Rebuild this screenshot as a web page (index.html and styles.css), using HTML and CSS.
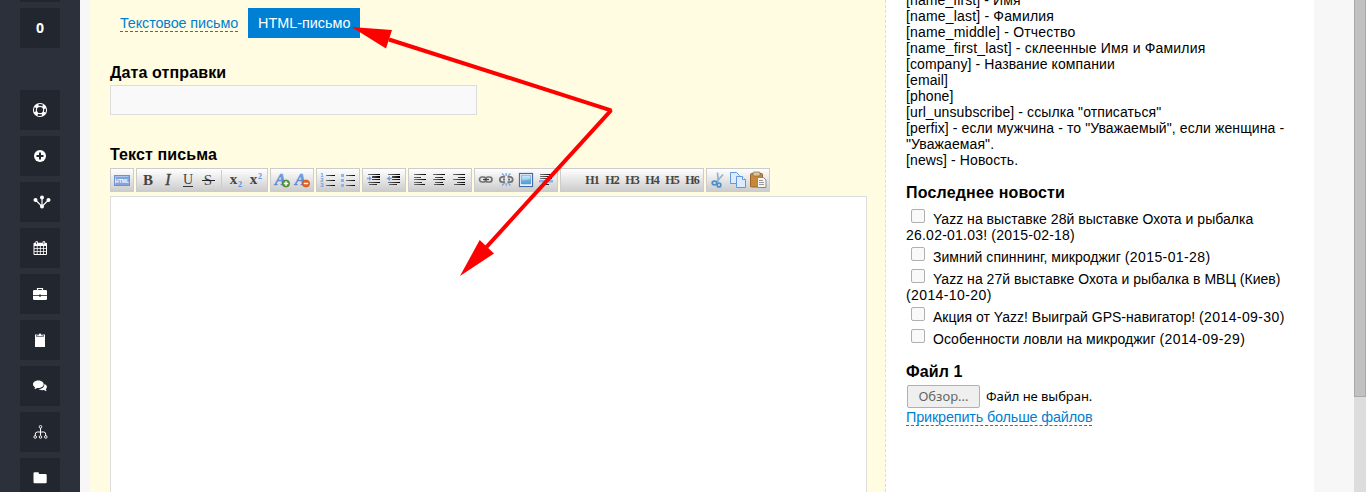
FILE: index.html
```html
<!DOCTYPE html>
<html lang="ru">
<head>
<meta charset="utf-8">
<title>Рассылка</title>
<link rel="stylesheet" href="styles.css">
</head>
<body>
<svg class="defs" width="0" height="0">
  <defs>
    <linearGradient id="ink" x1="0" x2="1" y1="0" y2="0"><stop offset="0" stop-color="#777"/><stop offset="1" stop-color="#000"/></linearGradient>
    <linearGradient id="blue" x1="0" x2="0" y1="0" y2="1"><stop offset="0" stop-color="#d3ebfd"/><stop offset="1" stop-color="#5fb0e6"/></linearGradient>
    <linearGradient id="letter" x1="0" x2="0" y1="0" y2="1"><stop offset="0" stop-color="#86b5f0"/><stop offset="1" stop-color="#4377c8"/></linearGradient>
  </defs>
</svg>
<div class="app">
  <nav class="sidebar">
    <a class="tile"></a>
    <a class="tile tile-count">0</a>
    <a class="tile"><svg width="16" height="16" viewBox="0 0 16 16"><circle cx="8" cy="8" r="5.100" fill="none" stroke="#fff" stroke-width="4"/><circle cx="8" cy="8" r="5.100" fill="none" stroke="#22262f" stroke-width="1.800" stroke-dasharray="4.200 3.811" stroke-dashoffset="2.100"/></svg></a>
    <a class="tile"><svg width="16" height="16" viewBox="0 0 16 16"><circle cx="8" cy="8" r="6" fill="#fff"/><path d="M8 4.500v7M4.500 8h7" stroke="#22262f" stroke-width="2"/></svg></a>
    <a class="tile"><svg class="nudge" width="18" height="16" viewBox="0 0 18 16"><path d="M2.500 6L9 12.500 15.500 6M9 3v10" fill="none" stroke="#fff" stroke-width="1.200"/><g fill="#fff"><circle cx="9" cy="3.500" r="2"/><circle cx="2.500" cy="6" r="2"/><circle cx="15.500" cy="6" r="2"/><circle cx="9" cy="12.500" r="2"/></g></svg></a>
    <a class="tile"><svg width="16" height="16" viewBox="0 0 16 16"><path fill="#fff" d="M2.500 2.800h1V1.200h2.300v1.600h4.900V1.200H13v1.600h1q1 0 1 1V14q0 1-1 1H2.500q-1 0-1-1V3.800q0-1 1-1z"/><path fill="#22262f" d="M2.500 6h2.300v2.200H2.500zM5.600 6h2.300v2.200H5.600zM8.700 6H11v2.200H8.700zM11.800 6H14v2.200h-2.200zM2.500 9h2.300v2.200H2.500zM5.600 9h2.300v2.200H5.600zM8.700 9H11v2.200H8.700zM11.800 9H14v2.200h-2.200zM2.500 12h2.300v2H2.500zM5.600 12h2.300v2H5.600zM8.700 12H11v2H8.700zM11.800 12H14v2h-2.200zM4.300 2h.7v2.300h-.7zM11.500 2h.7v2.300h-.7z"/></svg></a>
    <a class="tile"><svg width="16" height="16" viewBox="0 0 16 16"><path d="M5.500 4.500v-2h5v2" fill="none" stroke="#fff" stroke-width="1.200"/><rect x="1" y="4" width="14" height="10" rx="1.300" fill="#fff"/><path stroke="#22262f" stroke-width=".8" d="M1 9.500h14"/><path fill="#22262f" d="M7.200 8.500h1.600v2.200H7.200z"/></svg></a>
    <a class="tile"><svg width="16" height="16" viewBox="0 0 16 16"><path fill="#fff" d="M3 2.500h10V15H3z"/><path d="M4.500 4.500V3H6.500c0-2.500 3-2.500 3 0h2v1.500z" fill="#fff" stroke="#22262f" stroke-width=".6"/></svg></a>
    <a class="tile"><svg width="16" height="16" viewBox="0 0 16 16"><path fill="#fff" d="M12.300 6c2.300.7 3.300 2.500 2.200 4.200-.3.500-.7.900-.7 1.100 0 .6.500 1.200 1 1.700-1.200.1-2-.3-2.800-1-2.200.4-4.200 0-5.400-1C10 11 12.600 9 12.300 6z"/><path fill="#fff" d="M6.300 2.500C3.300 2.500 1 4.200 1 6.300c0 1.300.9 2.400 2.200 3.100-.2.700-.6 1.200-1.200 1.700 1.200 0 2.200-.5 3-1.200.4.100.9.100 1.300.1 3 0 5.400-1.600 5.400-3.700S9.300 2.500 6.300 2.500z"/></svg></a>
    <a class="tile"><svg width="16" height="16" viewBox="0 0 16 16"><g transform="translate(.5 0)" fill="none" stroke="#fff"><path d="M8 4v7.500M2.800 12V10q0-2 2.200-2h6q2.200 0 2.200 2v2"/><circle cx="8" cy="2.800" r="1.300" stroke-width=".9"/><circle cx="2.700" cy="13" r="1.300" stroke-width=".9"/><circle cx="8" cy="13" r="1.300" stroke-width=".9"/><circle cx="13.300" cy="13" r="1.300" stroke-width=".9"/></g></svg></a>
    <a class="tile"><svg width="16" height="16" viewBox="0 0 16 16"><path fill="#fff" d="M1.500 3.500q0-1.200 1.200-1.200h3.200q1 0 1.100 1.200v.5h6.500q1.200 0 1.200 1.200v7q0 1.100-1.200 1.100H2.700q-1.200 0-1.200-1.100z"/></svg></a>
  </nav>

  <main class="letter">
    <div class="tabs"><a class="tab tab-plain"><span>Текстовое письмо</span></a><a class="tab tab-active">HTML-письмо</a></div>
    <h3 class="label label-date">Дата отправки</h3>
    <input class="date" type="text">
    <h3 class="label label-text">Текст письма</h3>
    <div class="toolbar">
      <div class="group"><svg width="20" height="20" viewBox="0 0 20 20"><rect x="2.500" y="5.500" width="15" height="10" fill="#7da4de" stroke="#6b93cf"/><path d="M3.500 14.500v-8h13" fill="none" stroke="#a9c5ec"/><text class="t-html" x="10" y="13">HTML</text></svg></div>
      <div class="group">
        <svg width="20" height="20"><text class="t-b" x="10" y="15">B</text></svg>
        <svg width="20" height="20"><text class="t-i" x="10" y="15">I</text></svg>
        <svg width="20" height="20"><text class="t-u" x="10" y="14">U</text><path d="M5 16.500h10" stroke="#333"/></svg>
        <svg width="20" height="20"><text class="t-s" x="10" y="15">S</text><path d="M4 10.500h13" stroke="#222"/></svg>
        <i class="sep"></i>
        <svg width="20" height="20"><text class="t-x" x="7.500" y="14">x</text><text class="t-n" x="14" y="17">2</text></svg>
        <svg width="20" height="20"><text class="t-x" x="7.500" y="14">x</text><text class="t-n" x="14" y="9">2</text></svg>
      </div>
      <div class="group">
        <svg width="20" height="20"><text class="t-a" x="8.500" y="15">A</text><circle cx="14" cy="13.500" r="3.600" fill="#5a9a3a" stroke="#376d20" stroke-width=".6"/><path d="M14 11.300v4.400M11.800 13.500h4.400" stroke="#fff" stroke-width="1.400"/></svg>
        <svg width="20" height="20"><text class="t-a" x="8.500" y="15">A</text><circle cx="14" cy="13.500" r="3.600" fill="#ea6420" stroke="#b84412" stroke-width=".6"/><path d="M11.800 13.500h4.400" stroke="#fff" stroke-width="1.400"/></svg>
      </div>
      <div class="group">
        <svg width="20" height="20"><g class="t-l"><text x="4" y="7">1</text><text x="4" y="12">2</text><text x="4" y="17">3</text></g><path fill="url(#ink)" d="M8 5h9v1H8zM8 10h9v1H8zM8 15h9v1H8z"/></svg>
        <svg width="20" height="20"><path fill="#8bb4ec" d="M3 4h3v3H3zM3 9h3v3H3zM3 14h3v3H3z"/><path fill="url(#ink)" d="M8 5h9v1H8zM8 10h9v1H8zM8 15h9v1H8z"/></svg>
      </div>
      <div class="group">
        <svg width="20" height="20"><path fill="url(#ink)" d="M4 4h12v1H4zM8 6h8v2H8zM8 9h8v1H8zM4 12h12v1H4zM5 14h8v1H5z"/><path fill="#6fa2e8" d="M3 7.800h2V6l2.800 2.500L5 11V9.200H3z"/></svg>
        <svg width="20" height="20"><path fill="url(#ink)" d="M4 4h12v1H4zM8 6h8v2H8zM8 9h8v1H8zM4 12h12v1H4zM5 14h8v1H5z"/><path fill="#6fa2e8" d="M7.800 7.800H6V6L2.500 8.500 6 11V9.200h1.800z"/></svg>
      </div>
      <div class="group">
        <svg width="20" height="20"><path fill="url(#ink)" d="M4 4h12v1H4zM4 7h7v1H4zM4 9h12v1H4zM4 12h8v1H4zM4 14h11v1H4z"/></svg>
        <svg width="20" height="20"><path fill="url(#ink)" d="M3 4h12v1H3zM5 7h8v1H5zM3 9h12v1H3zM5 12h8v1H5zM4 14h10v1H4z"/></svg>
        <svg width="20" height="20"><path fill="url(#ink)" d="M3 4h12v1H3zM8 7h7v1H8zM3 9h12v1H3zM7 12h8v1H7zM4 14h11v1H4z"/></svg>
      </div>
      <div class="group">
        <svg width="20" height="20"><g fill="none" stroke="#727272" stroke-width="1.700"><rect x="3.500" y="7" width="6.500" height="5" rx="2.500"/><rect x="9.500" y="7" width="6.500" height="5" rx="2.500"/><path d="M7 9.500h6" stroke="#444" stroke-width="1.200"/></g></svg>
        <svg width="20" height="20"><g fill="none" stroke="#727272" stroke-width="1.800"><path d="M9 6.800H6.500a2.700 2.700 0 0 0 0 5.400H9M11.500 6.800H14a2.700 2.700 0 0 1 0 5.400h-2.500M7 9.500h2M12 9.500h2"/><path d="M6 3.500l2.500 2.500M14.500 3.500L12 6M6 15.500L8.500 13M14.500 15.500L12 13M10.200 3v3M10.200 16v-3" stroke="#74a8ec" stroke-width="1.300"/></g></svg>
        <svg width="20" height="20"><rect x="3.500" y="3.500" width="13" height="13" fill="#fff" stroke="#416cad" stroke-width="1.200"/><path fill="url(#blue)" stroke="#5389b8" stroke-width=".6" d="M5.300 5.300h9.400v8.700H5.300z"/><path fill="#4b9bd0" d="M5.500 10.500q4 0 9-1.500v5h-9z" opacity=".6"/></svg>
        <svg width="20" height="20"><path fill="url(#ink)" d="M4 4h12v1H4zM4 6h9v1H4zM4 8h12v1H4zM5 14h8v1H5z"/><path fill="#80b0ef" d="M3 10h14v2.500H3z"/></svg>
      </div>
      <div class="group">
        <i class="blank"></i>
        <svg width="20" height="20"><text class="t-h" x="10" y="14">H1</text></svg>
        <svg width="20" height="20"><text class="t-h" x="10" y="14">H2</text></svg>
        <svg width="20" height="20"><text class="t-h" x="10" y="14">H3</text></svg>
        <svg width="20" height="20"><text class="t-h" x="10" y="14">H4</text></svg>
        <svg width="20" height="20"><text class="t-h" x="10" y="14">H5</text></svg>
        <svg width="20" height="20"><text class="t-h" x="10" y="14">H6</text></svg>
      </div>
      <div class="group">
        <svg width="20" height="20"><path d="M9.500 2.500l.7 9M15 4.500L8 12.500" stroke="#8fb3d2" stroke-width="1.700"/><g fill="none" stroke="#4b8fcb" stroke-width="1.700"><ellipse cx="6.500" cy="13" rx="2.300" ry="1.800"/><ellipse cx="11" cy="15" rx="1.800" ry="2"/></g></svg>
        <svg width="20" height="20"><g fill="#dcebfd" stroke="#6399dc"><path d="M2.500 2.500h6l3 3v8h-9z"/><path d="M8.500 6.500h6l3 3v8h-9z"/><path d="M14.500 6.500v3h3" fill="#fff"/></g></svg>
        <svg width="20" height="20"><rect x="2.500" y="3.500" width="12" height="13.500" rx="1" fill="#c78839" stroke="#99642a"/><rect x="5" y="2" width="7" height="4" rx="1" fill="#d5c6a7" stroke="#8a6a3a" stroke-width=".7"/><path d="M9.500 7.500h6l2.500 2.500v7.500H9.500z" fill="#f6f6f6" stroke="#888"/><path stroke="#999" d="M11 10.500h4M11 12.500h5M11 14.500h5"/></svg>
      </div>
    </div>
    <div class="editor"></div>
    <svg class="arrows" width="300" height="260" viewBox="340 20 300 260"><path d="M389 39.500L611 110.300 486.500 247" fill="none" stroke="red" stroke-width="4" stroke-linejoin="bevel"/><path fill="red" d="M351.500 27L392 30l-6 18.500zM460 276l19.700-36 14.300 13.500z"/></svg>
  </main>

  <aside class="side">
    <p class="vars">[name_first] - Имя<br><span class="wide">[name_last] - Фамилия</span><br><span class="wide">[name_middle] - Отчество</span><br><span class="wide">[name_first_last] - склеенные Имя и Фамилия</span><br>[company] - Название компании<br>[email]<br>[phone]<br>[url_unsubscribe] - ссылка "отписаться"<br>[perfix] - если мужчина - то "Уважаемый", если женщина - "Уважаемая".<br>[news] - Новость.</p>
    <h3 class="label label-news">Последнее новости</h3>
    <div class="news">
      <label><i class="check"></i>Yazz на выставке 28й выставке Охота и рыбалка <span class="num">26.02-01.03! (2015-02-18)</span></label>
      <label><i class="check"></i>Зимний спиннинг, микроджиг <span class="day">(2015-01-28)</span></label>
      <label><i class="check"></i>Yazz на 27й выставке Охота и рыбалка в МВЦ (Киев) <span class="day">(2014-10-20)</span></label>
      <label><i class="check"></i>Акция от Yazz! Выиграй GPS-навигатор! <span class="day">(2014-09-30)</span></label>
      <label><i class="check"></i>Особенности ловли на микроджиг <span class="day">(2014-09-29)</span></label>
    </div>
    <h3 class="label label-file">Файл 1</h3>
    <div class="file"><button class="browse">Обзор...</button><span>Файл не выбран.</span></div>
    <a class="more">Прикрепить больше файлов</a>
  </aside>
  <div class="scrollbar"><div class="thumb"></div></div>
</div>
</body>
</html>
```
FILE: styles.css
```css
* { box-sizing: border-box; }
body { margin: 0; overflow: hidden; background: #f7f7f7; font: 14px/16px "Liberation Sans", Arial, sans-serif; color: #000; }
.defs { position: absolute; }
.app { display: flex; height: 492px; overflow: hidden; }

.sidebar { width: 80px; flex: none; padding-left: 20px; background: #2c303b; overflow: hidden; }
.tile { display: flex; align-items: center; justify-content: center; width: 40px; height: 40px; margin-bottom: 6px; background: #22262f; color: #fff; }
.tile:first-child { margin-top: -38px; }
.tile-count { margin-bottom: 42px; padding-bottom: 2px; font: bold 14px "Open Sans", sans-serif; }
.nudge { margin-left: 3px; }

.letter { position: relative; width: 796px; flex: none; margin-left: 10px; padding: 8px 18px 0 20px; background: #fffce2; border-right: 1px dashed #dcdce0; }
.tabs { display: flex; height: 30px; }
.tab { padding: 7px 10px; color: #0080d0; font-size: 14.4px; line-height: 16px; }
.tab-plain { width: 138px; letter-spacing: -.12px; white-space: nowrap; }
.tab span { display: block; border-bottom: 1px dashed #0080d0; }
.tab-active { background: #0080d4; color: #fff; }
.label { margin: 0; font-size: 16px; line-height: 18px; font-weight: bold; letter-spacing: .12px; }
.label-date { margin-top: 26px; }
.date { display: block; width: 367px; height: 30px; margin: 3px 0 0; padding: 0 8px; border: 1px solid #ddd; background: #f9f9f9; }
.label-text { margin-top: 31px; }
.toolbar { display: flex; gap: 2px; margin-top: 4px; }
.group { display: flex; height: 24px; padding: 1px; border: 1px solid #ccc; background: linear-gradient(#fff, #ccc); }
.group svg { display: block; flex: none; }
.sep { width: 8px; height: 18px; background: linear-gradient(#ccc, #ccc) 3px 0 / 1px 18px no-repeat; }
.blank { width: 20px; }
.editor { width: 757px; height: 320px; margin-top: 4px; border: 1px solid #ddd; background: #fff; }
.arrows { position: absolute; left: 250px; top: 20px; }

.group text { text-anchor: middle; font-family: "Liberation Serif", serif; font-weight: bold; fill: #444; }
.group .t-html { font: bold 5px "Liberation Sans", sans-serif; fill: #fff; }
.group .t-b { font-size: 15px; }
.group .t-i { font-size: 16px; font-style: italic; font-weight: normal; stroke: #444; stroke-width: .4px; }
.group .t-u { font-size: 14px; font-weight: normal; }
.group .t-s { font-size: 15px; font-weight: normal; }
.group .t-x { font-size: 15px; }
.group .t-n { font-size: 8px; fill: #5791e0; }
.group .t-a { font-size: 17px; font-style: italic; fill: url(#letter); stroke: #5c8fd8; stroke-width: .5px; }
.group .t-l text { font: bold 6px "Liberation Sans", sans-serif; fill: #689be2; }
.group .t-h { font-size: 12px; letter-spacing: -.9px; }

.side { width: 428px; flex: none; padding: 0 24px 0 20px; background: #fff; }
.vars { margin: -8px 0 0; letter-spacing: .1px; }
.wide { letter-spacing: .18px; }
.label-news { margin-top: 16px; letter-spacing: .18px; }
.news { margin-top: 3px; }
.news label { display: block; letter-spacing: .03px; }
.num { letter-spacing: .22px; }
.day { letter-spacing: .4px; }
.check { display: inline-block; width: 14px; height: 14px; margin: 4px 8px 0 5px; vertical-align: 1px; border: 1px solid #b0b0b0; border-radius: 2px; background: #f9f9f9; }
.label-file { margin-top: 16px; }
.file { display: flex; align-items: center; gap: 6px; height: 23px; margin: 4px 0 0 1px; font: 13px "Noto Sans", sans-serif; letter-spacing: -.05px; }
.file span { margin-top: -1px; }
.browse { width: 73px; height: 23px; padding: 0 0 1px; border: 1px solid #b0b0b0; border-radius: 2px; background: #efefef; color: #666; font: inherit; }
.more { display: inline-block; height: 17px; margin-top: 1px; color: #0080d0; font-size: 14.4px; letter-spacing: -.15px; border-bottom: 1px dashed #0080d0; }

.scrollbar { width: 12px; margin-left: auto; background: #ddd; }
.thumb { height: 397px; border: 1px solid #a8a8a8; border-top: 0; background: #c1c1c1; }
```
